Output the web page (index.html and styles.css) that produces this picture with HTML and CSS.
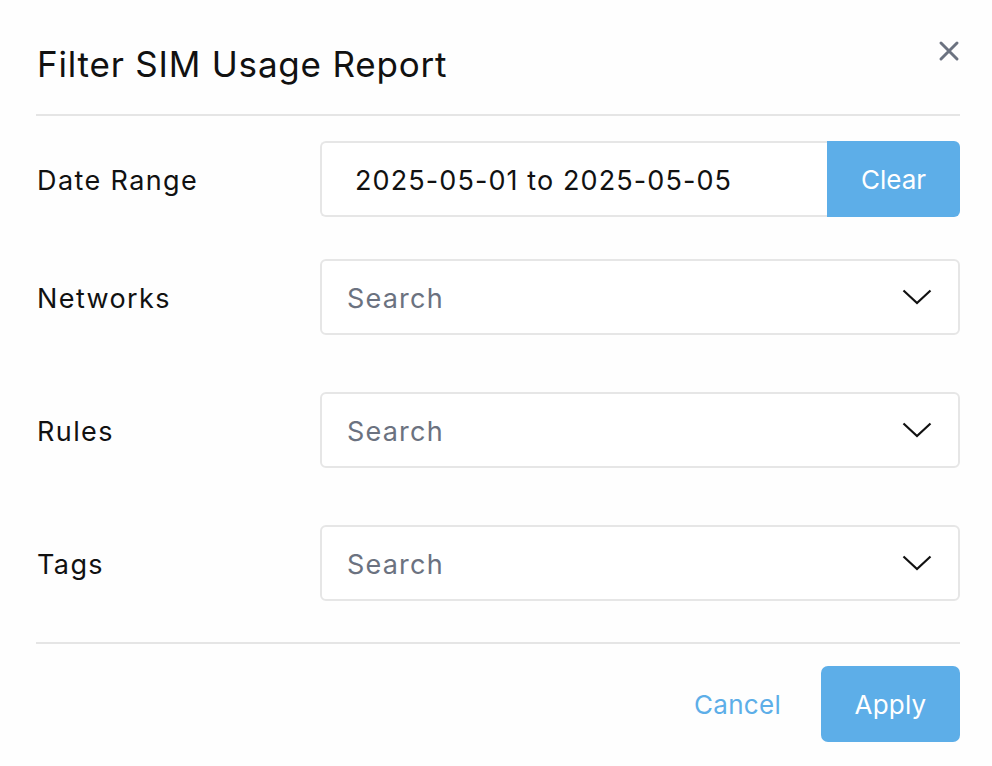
FILE: index.html
```html
<!DOCTYPE html>
<html>
<head>
<meta charset="utf-8">
<link rel="stylesheet" href="styles.css">
</head>
<body>
<div class="modal">
  <header class="modal-header">
    <h1 class="title">Filter SIM Usage Report</h1>
    <button class="close" aria-label="Close">
      <svg width="22" height="22" viewBox="0 0 22 22"><path d="M3 3 L19 19 M19 3 L3 19" stroke="#6b7280" stroke-width="3" stroke-linecap="round"/></svg>
    </button>
  </header>
  <div class="body">
    <div class="row row-date">
      <label class="label">Date Range</label>
      <div class="date-group">
        <div class="date-input">2025-05-01 to 2025-05-05</div>
        <button class="clear">Clear</button>
      </div>
    </div>
    <div class="row">
      <label class="label">Networks</label>
      <div class="select"><span class="placeholder">Search</span>
        <svg class="chev" width="30" height="16" viewBox="0 0 30 16"><path d="M1.5 1.5 L15 14 L28.5 1.5" fill="none" stroke="#111" stroke-width="2.2"/></svg>
      </div>
    </div>
    <div class="row">
      <label class="label">Rules</label>
      <div class="select"><span class="placeholder">Search</span>
        <svg class="chev" width="30" height="16" viewBox="0 0 30 16"><path d="M1.5 1.5 L15 14 L28.5 1.5" fill="none" stroke="#111" stroke-width="2.2"/></svg>
      </div>
    </div>
    <div class="row">
      <label class="label">Tags</label>
      <div class="select"><span class="placeholder">Search</span>
        <svg class="chev" width="30" height="16" viewBox="0 0 30 16"><path d="M1.5 1.5 L15 14 L28.5 1.5" fill="none" stroke="#111" stroke-width="2.2"/></svg>
      </div>
    </div>
  </div>
  <footer class="footer">
    <button class="cancel">Cancel</button>
    <button class="apply">Apply</button>
  </footer>
</div>
</body>
</html>
```
FILE: styles.css
```css
* { box-sizing: border-box; }
html, body { margin: 0; padding: 0; background: #fefefe; }
body { font-family: "Inter", "Liberation Sans", sans-serif; color: #111; }
.modal { width: 992px; height: 766px; padding: 0 32px 0 36px; }
.modal-header {
  display: flex; align-items: center; justify-content: space-between;
  height: 116px; border-bottom: 2px solid #e5e5e5; padding: 13px 0 0 1px;
}
.title { font-size: 35px; font-weight: 400; margin: 0; letter-spacing: 0.8px; }
.close { background: none; border: none; padding: 0; margin: -25px 0 0 0; width: 22px; height: 22px; display: flex; }
.body { padding-top: 25px; padding-bottom: 41px; border-bottom: 2px solid #e5e5e5; }
.row { display: flex; align-items: center; margin-top: 57px; }
.row-date { margin-top: 0; margin-bottom: -15px; }
.label { width: 284px; font-size: 27px; padding-left: 1px; letter-spacing: 1.4px; padding-top: 2px; }
.date-group { flex: 1; display: flex; height: 76px; }
.date-input {
  flex: 1; border: 2px solid #e6e6e6; border-right: none; border-radius: 6px 0 0 6px;
  font-size: 27px; letter-spacing: 1.1px; padding: 2px 0 0 33px; display: flex; align-items: center; background: #fff;
}
.clear {
  width: 133px; background: #5daee8; color: #fff; border: none; border-radius: 0 6px 6px 0;
  font-family: inherit; font-size: 26px; letter-spacing: 0; padding-top: 2px;
}
.select {
  flex: 1; height: 76px; border: 2px solid #e6e6e6; border-radius: 6px; background: #fff;
  display: flex; align-items: center; justify-content: space-between; padding: 0 26px 0 25px;
}
.placeholder { font-size: 27px; color: #6b7280; letter-spacing: 1.2px; padding-top: 2px; }
.chev { display: block; }
.footer { display: flex; justify-content: flex-end; align-items: center; padding-top: 22px; }
.cancel {
  background: none; border: none; color: #5daee8; font-family: inherit; font-size: 26px; letter-spacing: 0.3px;
  padding: 0; margin-right: 40px;
}
.apply {
  width: 139px; height: 76px; background: #5daee8; color: #fff; border: none; border-radius: 7px;
  font-family: inherit; font-size: 26px; letter-spacing: 0.2px;
}
```
